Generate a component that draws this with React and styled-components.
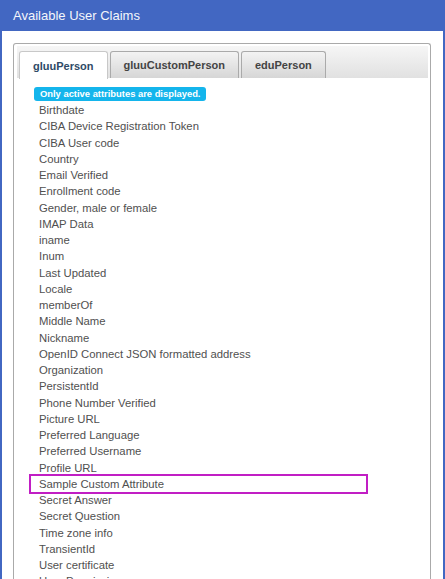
import React from 'react';
import styled, { createGlobalStyle } from 'styled-components';

const GlobalStyle = createGlobalStyle`
	html, body {
		margin: 0;
		padding: 0;
		background: #ffffff;
		font-family: "Liberation Sans", Arial, sans-serif;
	}
`;

const Panel = styled.div`
	width: 445px;
	box-sizing: border-box;
	border-left: 2px solid #4267c2;
	border-right: 2px solid #4267c2;
	min-height: 579px;
`;

const PanelHeader = styled.div`
	height: 31px;
	margin: 0 -2px;
	background: #4267c2;
	color: #f4f6fb;
	font-size: 13px;
	line-height: 31px;
	padding-left: 13px;
`;

const PanelBody = styled.div`
	padding: 12px 12px 0 11px;
`;

const TabBox = styled.div`
	border: 1px solid #aaaaaa;
	border-bottom: none;
	border-radius: 3px 3px 0 0;
	padding: 2px 2px 0 3px;
`;

const TabStrip = styled.div`
	display: flex;
	gap: 2px;
	height: 32px;
	box-sizing: border-box;
	padding: 5px 0 0 2px;
	background: linear-gradient(#f6f6f6, #e1e1e1);
`;

const Tab = styled.div`
	box-sizing: border-box;
	padding: 0 13px;
	display: flex;
	align-items: center;
	font-size: 11px;
	font-weight: bold;
	border: 1px solid ${(p) => (p.active ? '#c8c8c8' : '#aaaaaa')};
	border-bottom: none;
	border-radius: 3px 3px 0 0;
	color: ${(p) => (p.active ? '#2e4a66' : '#444444')};
	background: ${(p) => (p.active ? '#ffffff' : 'linear-gradient(#f3f3f3, #d6d6d6)')};
	height: ${(p) => (p.active ? 28 : 27)}px;
`;

const TabContent = styled.div`
	padding: 5px 0 0 17px;
`;

const Badge = styled.span`
	display: inline-block;
	background: #14b5ec;
	color: #ffffff;
	font-size: 9.4px;
	font-weight: bold;
	line-height: 14px;
	padding: 0 6px;
	border-radius: 3px;
	margin-bottom: 1px;
`;

const ClaimList = styled.ul`
	list-style: none;
	margin: 0;
	padding: 0;
`;

const Claim = styled.li`
	width: 335px;
	box-sizing: border-box;
	padding-left: 8px;
	margin-left: -3px;
	font-size: 11.3px;
	line-height: 16.25px;
	color: #505050;
	outline: ${(p) => (p.highlighted ? '2px solid #c11ec4' : 'none')};
	outline-offset: 0;
`;

const claims = [
	'Birthdate',
	'CIBA Device Registration Token',
	'CIBA User code',
	'Country',
	'Email Verified',
	'Enrollment code',
	'Gender, male or female',
	'IMAP Data',
	'iname',
	'Inum',
	'Last Updated',
	'Locale',
	'memberOf',
	'Middle Name',
	'Nickname',
	'OpenID Connect JSON formatted address',
	'Organization',
	'PersistentId',
	'Phone Number Verified',
	'Picture URL',
	'Preferred Language',
	'Preferred Username',
	'Profile URL',
	'Sample Custom Attribute',
	'Secret Answer',
	'Secret Question',
	'Time zone info',
	'TransientId',
	'User certificate',
	'User Permission',
];

const App = () => (
	<>
		<GlobalStyle />
		<Panel>
			<PanelHeader>Available User Claims</PanelHeader>
			<PanelBody>
				<TabBox>
					<TabStrip>
						<Tab active>gluuPerson</Tab>
						<Tab>gluuCustomPerson</Tab>
						<Tab>eduPerson</Tab>
					</TabStrip>
					<TabContent>
						<Badge>Only active attributes are displayed.</Badge>
						<ClaimList>
							{claims.map((c) => (
								<Claim key={c} highlighted={c === 'Sample Custom Attribute'}>
									{c}
								</Claim>
							))}
						</ClaimList>
					</TabContent>
				</TabBox>
			</PanelBody>
		</Panel>
	</>
);

export default App;
